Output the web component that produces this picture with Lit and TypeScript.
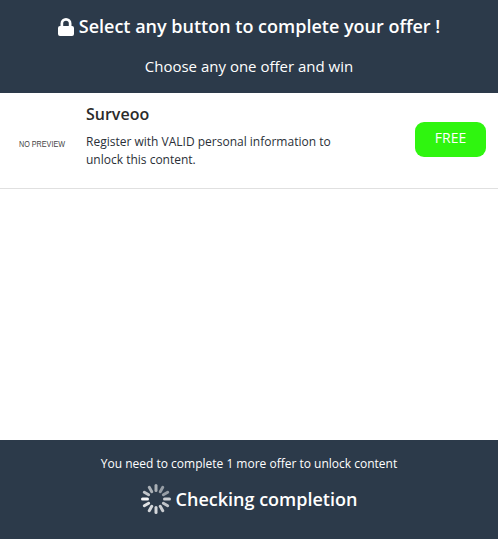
import { LitElement, html, css, svg } from "lit";
import { customElement } from "lit/decorators.js";

const spokes = [0.6, 0.5, 0.5, 0.75, 0.7, 0.75, 0.8, 0.8, 0.85, 0.95, 0.7, 0.6];

@customElement("app-root")
export class AppRoot extends LitElement {
  static styles = css`
    :host {
      display: flex;
      flex-direction: column;
      height: 100vh;
      font-family: "Open Sans", sans-serif;
      color: #2b2b2b;
      background: #fff;
    }
    .header {
      height: 93px;
      box-sizing: border-box;
      background: #2c3a4a;
      color: #fff;
      text-align: center;
      padding-top: 13px;
    }
    .title {
      display: flex;
      justify-content: center;
      align-items: center;
      gap: 5px;
      font-size: 18px;
      font-weight: 600;
      line-height: 27px;
    }
    .sub {
      margin-top: 15px;
      font-size: 15px;
      line-height: 22px;
    }
    .main {
      flex: 1;
    }
    .row {
      height: 96px;
      box-sizing: border-box;
      border-bottom: 1px solid #e0e0e0;
      display: flex;
      align-items: center;
    }
    .thumb {
      width: 86px;
      flex: none;
      padding-left: 19px;
      padding-top: 7px;
      box-sizing: border-box;
      font-family: "Liberation Sans", sans-serif;
      font-size: 9px;
      color: #444;
    }
    .thumb span {
      display: inline-block;
      white-space: nowrap;
      transform: scaleX(0.8);
      transform-origin: left center;
    }
    .info {
      flex: 1;
      min-width: 0;
      align-self: flex-start;
      padding-top: 9px;
    }
    .name {
      font-size: 16px;
      font-weight: 600;
      line-height: 24px;
      margin-bottom: 7px;
    }
    .desc {
      font-size: 12px;
      line-height: 18px;
      width: 260px;
      color: #2a2f38;
    }
    .free {
      width: 71px;
      height: 35px;
      flex: none;
      margin-right: 12px;
      margin-bottom: 2px;
      background: #2ff50f;
      color: #fff;
      border-radius: 9px;
      font-size: 14px;
      line-height: 32px;
      text-align: center;
    }
    .footer {
      height: 99px;
      box-sizing: border-box;
      background: #2c3a4a;
      color: #fff;
      text-align: center;
      padding-top: 15px;
    }
    .need {
      font-size: 12px;
      line-height: 18px;
    }
    .check {
      margin-top: 10px;
      display: flex;
      justify-content: center;
      align-items: center;
      gap: 5px;
      font-size: 18px;
      font-weight: 600;
      line-height: 32px;
    }
    svg {
      display: block;
      flex: none;
    }
  `;

  render() {
    return html`
      <div class="header">
        <div class="title">
          <svg width="16" height="18" viewBox="0 0 16 18">
            <path fill="#fff" d="M2.500 8V5.500a5.500 5.500 0 0 1 11 0V8h.5A2 2 0 0 1 16 10v6a2 2 0 0 1-2 2H2a2 2 0 0 1-2-2v-6a2 2 0 0 1 2-2zM5.200 8h5.600V5.500a2.800 2.800 0 0 0-5.600 0z"/>
          </svg>
          <span>Select any button to complete your offer !</span>
        </div>
        <div class="sub">Choose any one offer and win</div>
      </div>
      <div class="main">
        <div class="row">
          <div class="thumb"><span>NO PREVIEW</span></div>
          <div class="info">
            <div class="name">Surveoo</div>
            <div class="desc">Register with VALID personal information to unlock this content.</div>
          </div>
          <div class="free">FREE</div>
        </div>
      </div>
      <div class="footer">
        <div class="need">You need to complete 1 more offer to unlock content</div>
        <div class="check">
          <svg width="30" height="30" viewBox="-15 -15 30 30">
            ${spokes.map(
              (o, i) => svg`<line x1="0" y1="-8.500" x2="0" y2="-13.500" stroke="#fff" stroke-width="3" stroke-linecap="round" stroke-opacity="${o}" transform="rotate(${i * 30})"/>`
            )}
          </svg>
          <span>Checking completion</span>
        </div>
      </div>
    `;
  }
}
